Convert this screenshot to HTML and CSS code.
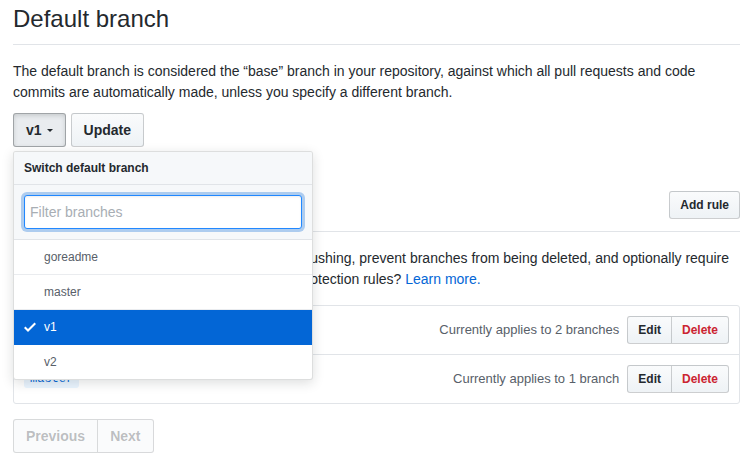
FILE: index.html
```html
<!DOCTYPE html>
<html>
<head>
<meta charset="utf-8">
<link rel="stylesheet" href="styles.css">
</head>
<body>
<div class="page">
  <div class="subhead first">
    <h2 class="subhead-title">Default branch</h2>
  </div>
  <p class="desc">The default branch is considered the “base” branch in your repository, against which all pull requests and code commits are automatically made, unless you specify a different branch.</p>
  <div class="branch-form">
    <div class="menu-wrap">
      <button class="btn btn-open">v1<span class="caret"></span></button>
      <div class="select-menu">
        <div class="menu-header">Switch default branch</div>
        <div class="menu-filter">
          <input class="filter-input" type="text" placeholder="Filter branches">
        </div>
        <div class="menu-list">
          <div class="menu-item">goreadme</div>
          <div class="menu-item">master</div>
          <div class="menu-item selected">
            <svg class="check" width="12" height="16" viewBox="0 0 12 16"><path fill="currentColor" fill-rule="evenodd" d="M12 5l-8 8-4-4 1.5-1.5L4 10l6.5-6.5L12 5z"/></svg>v1
          </div>
          <div class="menu-item">v2</div>
        </div>
      </div>
    </div>
    <button class="btn">Update</button>
  </div>

  <div class="subhead second">
    <h2 class="subhead-title">Branch protection rules</h2>
    <button class="btn btn-sm">Add rule</button>
  </div>
  <p class="desc">Define branch protection rules to disable force pushing, prevent branches from being deleted, and optionally require status checks before merging. New to branch protection rules? <a href="#">Learn more.</a></p>

  <div class="rules">
    <div class="rule">
      <span class="branch-name">v*</span>
      <span class="applies">Currently applies to 2 branches</span>
      <div class="btn-group">
        <button class="btn btn-sm">Edit</button><button class="btn btn-sm danger">Delete</button>
      </div>
    </div>
    <div class="rule">
      <span class="branch-name">master</span>
      <span class="applies">Currently applies to 1 branch</span>
      <div class="btn-group">
        <button class="btn btn-sm">Edit</button><button class="btn btn-sm danger">Delete</button>
      </div>
    </div>
  </div>

  <div class="pagination">
    <button class="btn disabled">Previous</button><button class="btn disabled">Next</button>
  </div>
</div>
</body>
</html>
```

FILE: styles.css
```css
* { box-sizing: border-box; }
html, body { margin: 0; padding: 0; background: #fff; }
body {
  font-family: "Liberation Sans", Arial, sans-serif;
  font-size: 14px;
  line-height: 1.5;
  color: #24292e;
  width: 755px;
  height: 462px;
  overflow: hidden;
}
.page { padding: 4px 15px 0 13px; }

.subhead {
  display: flex;
  align-items: center;
  border-bottom: 1px solid #e1e4e8;
}
.subhead.first { padding-bottom: 10px; }
.subhead.second { margin-top: 43px; padding-bottom: 11px; }
.subhead-title {
  flex: 1;
  margin: 0;
  font-size: 24px;
  font-weight: 400;
  line-height: 30px;
}

.desc { margin: 16px 0 0; }
.desc a { color: #0366d6; text-decoration: none; }

.branch-form {
  display: flex;
  gap: 5px;
  margin-top: 10px;
}
.menu-wrap { position: relative; }

.btn {
  font-family: "Liberation Sans", Arial, sans-serif;
  font-size: 14px;
  font-weight: 700;
  line-height: 20px;
  padding: 6px 12px;
  color: #24292e;
  background: linear-gradient(-180deg, #fafbfc 0%, #eff3f6 90%);
  border: 1px solid rgba(27, 31, 35, 0.2);
  border-radius: 3px;
  cursor: pointer;
  white-space: nowrap;
}
.btn-open {
  background: #e9ecef;
  border-color: rgba(27, 31, 35, 0.35);
  box-shadow: inset 0 2px 4px rgba(27, 31, 35, 0.15);
  display: flex;
  align-items: center;
}
.caret {
  display: inline-block;
  width: 0;
  height: 0;
  margin-left: 5px;
  border-top: 3px solid #24292e;
  border-left: 3px solid transparent;
  border-right: 3px solid transparent;
}
.btn-sm {
  font-size: 12px;
  padding: 3px 10px;
  line-height: 20px;
}

.select-menu {
  position: absolute;
  top: 38px;
  left: 0;
  width: 300px;
  z-index: 10;
  background: #fff;
  border: 1px solid rgba(27, 31, 35, 0.15);
  border-radius: 3px;
  box-shadow: 0 3px 12px rgba(27, 31, 35, 0.15);
  overflow: hidden;
}
.menu-header {
  padding: 8px 10px;
  font-size: 12px;
  font-weight: 700;
  line-height: 16px;
  background: #f6f8fa;
  border-bottom: 1px solid #e1e4e8;
}
.menu-filter {
  padding: 10px;
  background: #f6f8fa;
  border-bottom: 1px solid #e1e4e8;
}
.filter-input {
  display: block;
  width: 100%;
  height: 34px;
  padding: 6px 5px;
  font-family: "Liberation Sans", Arial, sans-serif;
  font-size: 14px;
  color: #24292e;
  background: #fff;
  border: 1px solid #2188ff;
  border-radius: 3px;
  outline: none;
  box-shadow: inset 0 1px 2px rgba(27, 31, 35, 0.075), 0 0 0 3px rgba(3, 102, 214, 0.3);
}
.filter-input::placeholder { color: #a8aeb4; }
.menu-item {
  display: flex;
  align-items: center;
  position: relative;
  padding: 8px 8px 8px 30px;
  font-size: 12px;
  line-height: 18px;
  color: #586069;
  border-bottom: 1px solid #eaecef;
}
.menu-item:last-child { border-bottom: 0; }
.menu-item.selected {
  background: #0366d6;
  color: #fff;
  border-bottom-color: #0366d6;
}
.check {
  position: absolute;
  left: 10px;
  top: 9px;
  color: #fff;
}

.rules {
  margin-top: 15px;
  border: 1px solid #e1e4e8;
  border-radius: 3px;
}
.rule {
  display: flex;
  align-items: center;
  padding: 10px 10px;
  border-top: 1px solid #e1e4e8;
}
.rule:first-child { border-top: 0; }
.branch-name {
  font-family: "Liberation Mono", "DejaVu Sans Mono", monospace;
  font-size: 12px;
  line-height: 14px;
  padding: 2px 6px;
  color: #0366d6;
  background: #eaf5ff;
  border-radius: 3px;
}
.applies {
  flex: 1;
  text-align: right;
  font-size: 13px;
  color: #586069;
  margin-right: 8px;
}
.btn-group { display: flex; }
.btn-group .btn:first-child { border-top-right-radius: 0; border-bottom-right-radius: 0; }
.btn-group .btn + .btn { border-left: 0; border-top-left-radius: 0; border-bottom-left-radius: 0; }
.danger { color: #cb2431; }

.pagination {
  display: flex;
  margin-top: 15px;
}
.pagination .btn:first-child { border-top-right-radius: 0; border-bottom-right-radius: 0; }
.pagination .btn + .btn { border-left: 0; border-top-left-radius: 0; border-bottom-left-radius: 0; }
.btn.disabled {
  color: rgba(36, 41, 46, 0.3);
  background: #fafbfc;
  border-color: rgba(27, 31, 35, 0.15);
  cursor: default;
}
```
